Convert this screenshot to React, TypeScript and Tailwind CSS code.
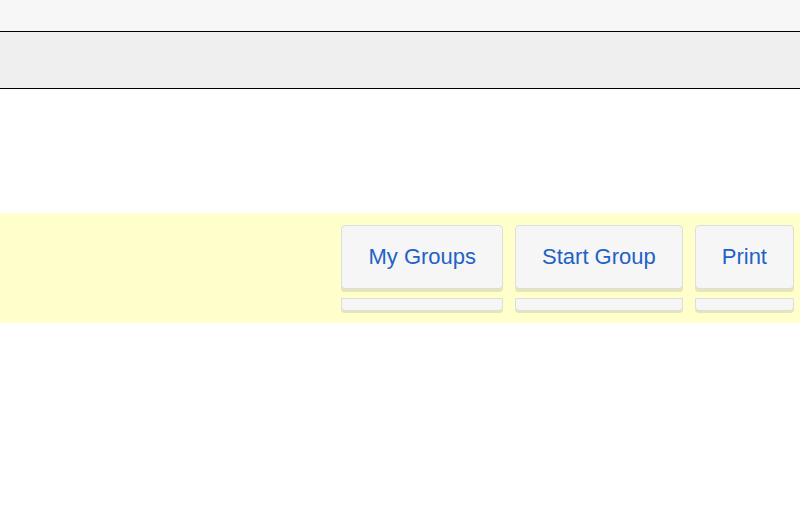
import React from "react";

const items = ["My Groups", "Start Group", "Print"];

export default function App() {
  return (
    <div className="w-[800px] h-[510px] bg-white" style={{ fontFamily: '"Liberation Sans", Arial, sans-serif' }}>
      <div className="h-[32px] bg-[#f7f7f7] border-b border-black" />
      <div className="h-[57px] bg-[#efefef] border-b border-black" />
      <div className="h-[124px]" />
      <div className="h-[110px] bg-[#ffffcc] flex justify-end gap-3 pr-[6px] pt-[12px]">
        {items.map((t) => (
          <div key={t} className="flex flex-col">
            <div className="h-[64px] px-[26px] pb-[2px] flex items-center justify-center bg-[#f6f6f6] border border-[#dddddd] rounded-[4px] shadow-[0_3px_0_rgba(0,0,0,0.1)] text-[22px] text-[#2262c6] whitespace-nowrap">
              {t}
            </div>
            <div className="mt-[9px] h-[13px] bg-[#f6f6f6] border border-[#dddddd] rounded-b-[4px] shadow-[0_2px_0_rgba(0,0,0,0.1)]" />
          </div>
        ))}
      </div>
    </div>
  );
}
